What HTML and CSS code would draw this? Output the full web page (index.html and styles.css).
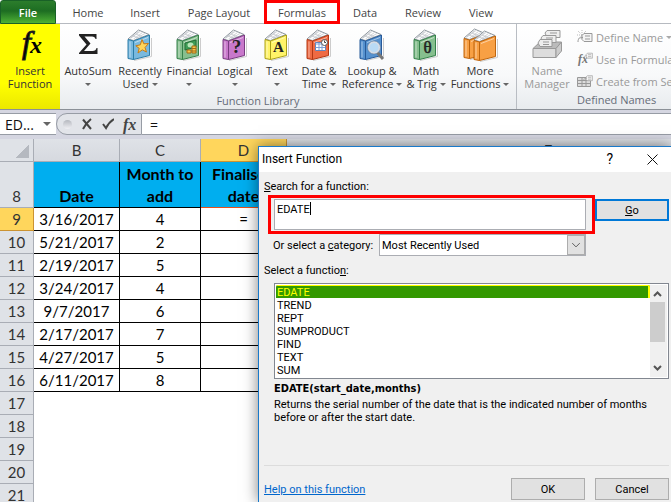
FILE: index.html
```
<!DOCTYPE html>
<html lang="en">
  <head>
    <meta charset="UTF-8" />
    <meta name="viewport" content="width=device-width, initial-scale=1.0" />
    <title>Insert Function</title>
    <link rel="stylesheet" href="styles.css">
  </head>
  <body>
    <!-- shared icon shapes -->
    <svg class="symbols" aria-hidden="true">
      <symbol id="book" viewBox="0 0 26 32">
        <path class="book-shade" d="M7 31.500L24.500 27.500V9" />
        <path class="book-pages" d="M1 10L11.500 1L22 5.500L6.500 11.500Z" />
        <path class="book-lines" d="M4 9L13 2.500M6.500 10L15.500 3.500M9 9.500L18 4.500M3 9.500L11.500 2.500M9 5L16 8M6 7L13 9.500" />
        <path class="book-cover" d="M1 10.500L6.500 12V30.500L1 29.500Z" />
        <path class="book-cover" d="M6.500 12L22.500 6V26.500L6.500 30.500Z" />
        <path class="book-glint" d="M3 12.500V28.500M8 13.500L21 8.500" />
      </symbol>
      <symbol id="tag" viewBox="0 0 16 12">
        <path d="M5 3.500L7 1.500H15V9.500H7L5 7.500Z" fill="#f4f4f4" stroke="#999" />
        <path d="M8 4H13M8 7H13M1 10C1 6 3 5.500 6 5.500" fill="none" stroke="#999" />
      </symbol>
    </svg>

    <nav class="tabs">
      <button class="tab file">File</button>
      <button class="tab home">Home</button>
      <button class="tab insert">Insert</button>
      <button class="tab layout">Page Layout</button>
      <button class="tab formulas">Formulas</button>
      <button class="tab data">Data</button>
      <button class="tab review">Review</button>
      <button class="tab view">View</button>
    </nav>

    <div class="ribbon">
      <button class="tool insert-function">
        <svg class="icon" viewBox="0 0 28 32">
          <text class="fx-f" x="6" y="24">f</text>
          <text class="fx-x" x="14" y="24">x</text>
        </svg>
        <span>Insert<br>Function</span>
      </button>
      <div class="group library">
        <div class="tools">
          <button class="tool autosum">
            <svg class="icon" viewBox="0 0 28 32">
              <path d="M5 5H22.500V10H21.500Q21 7.500 18 7.500H10.500L16.500 14.500L10 22H18.500Q22 22 22.500 19H23.500V25H5V24L12.500 15.500L5 6.500Z" fill="#222" />
            </svg>
            <span>AutoSum<br><i class="arrow"></i></span>
          </button>
          <button class="tool recent">
            <svg class="icon book blue" viewBox="0 0 26 32"><use href="#book" />
              <path d="M15 10.500L16.800 14.800L21.500 14.500L18 18.500L19.500 23L15.300 20.800L11 24L12.200 19.300L8.800 16.800L13.300 15.800Z" fill="#ffd65a" stroke="#c77a16" /></svg>
            <span>Recently<br>Used <i class="arrow"></i></span>
          </button>
          <button class="tool financial">
            <svg class="icon book green" viewBox="0 0 26 32"><use href="#book" />
              <path d="M9 14L20 11V18L9 21Z" fill="#3f9c56" stroke="#246c36" /><ellipse cx="14.500" cy="16" rx="3" ry="2.500" fill="#b9e6b8" />
              <path d="M11 21H15V24H11ZM16 17H20V24H16Z" fill="#f6c54b" stroke="#a66b14" /><path d="M16 19.500H20M16 22H20" stroke="#a66b14" /></svg>
            <span>Financial<br><i class="arrow"></i></span>
          </button>
          <button class="tool logical">
            <svg class="icon book purple" viewBox="0 0 26 32"><use href="#book" /><text class="glyph" x="14.500" y="24">?</text></svg>
            <span>Logical<br><i class="arrow"></i></span>
          </button>
          <button class="tool text">
            <svg class="icon book yellow" viewBox="0 0 26 32"><use href="#book" /><text class="glyph small" x="14.500" y="23">A</text></svg>
            <span>Text<br><i class="arrow"></i></span>
          </button>
          <button class="tool date">
            <svg class="icon book red" viewBox="0 0 26 32"><use href="#book" />
              <path d="M9.500 13.500H19.500V21.500H9.500Z" fill="#fff" stroke="#6484bb" /><path d="M9.500 15H19M9.500 18.500H19M13 14V21M16 14V21" stroke="#7d9fd6" />
              <circle cx="18.500" cy="13.500" r="3" fill="#fff" stroke="#555" /><path d="M18.500 11.500V13.500H20" fill="none" stroke="#444" /></svg>
            <span>Date &amp;<br>Time <i class="arrow"></i></span>
          </button>
          <button class="tool lookup">
            <svg class="icon book navy" viewBox="0 0 26 32"><use href="#book" />
              <path d="M18 23L24 30" stroke="#777" stroke-width="3" /><circle cx="15" cy="18.500" r="5.500" fill="#b9daf5" stroke="#d6dce5" stroke-width="2" /><circle cx="15" cy="18.500" r="6.500" fill="none" stroke="#68778b" stroke-width=".5" /></svg>
            <span>Lookup &amp;<br>Reference <i class="arrow"></i></span>
          </button>
          <button class="tool math">
            <svg class="icon book green" viewBox="0 0 26 32"><use href="#book" /><text class="glyph theta" x="14.500" y="24">θ</text></svg>
            <span>Math<br>&amp; Trig <i class="arrow"></i></span>
          </button>
          <button class="tool more">
            <svg class="icon orange" viewBox="0 0 34 32"><use href="#book" width="26" height="32" x="0" y="-1" /><use href="#book" width="26" height="32" x="10" y="1" /></svg>
            <span>More<br>Functions <i class="arrow"></i></span>
          </button>
        </div>
        <div class="group-name">Function Library</div>
      </div>
      <div class="group names">
        <button class="tool manager" disabled>
          <svg class="icon" viewBox="0 0 32 32">
            <path d="M2 19.500L9 13H30.500L25 19.500Z" fill="#bbb" stroke="#999" />
            <g fill="#eee" stroke="#999"><path d="M14 4L16 1.500H29V8.500H16Z" /><path d="M10 9L12 6.500H25V13.500H12Z" /><path d="M7 14L9 10.500H21V17.500H9Z" /></g>
            <path d="M19 4H26M15 9H22M12 13H18M12 15.500H18" stroke="#999" />
            <path d="M2 19.500H25V28.500H2Z" fill="#ddd" stroke="#999" /><path d="M25 19.500L30.500 13V22L25 28.500Z" fill="#ccc" stroke="#999" />
          </svg>
          <span>Name<br>Manager</span>
        </button>
        <div class="name-list">
          <button class="line-tool" disabled>
            <svg viewBox="0 0 16 14"><path d="M1 1L9 9M9 1L1 9M5 0V10M0 5H10" stroke="#bbb" stroke-dasharray="1 1" /><use href="#tag" x="0" y="2" width="16" height="12" /></svg>
            Define Name <i class="arrow"></i>
          </button>
          <button class="line-tool" disabled>
            <svg viewBox="0 0 16 14"><text class="mini-fx" x="1" y="11">fx</text><use href="#tag" x="6" y="0" width="10" height="8" /></svg>
            Use in Formula <i class="arrow"></i>
          </button>
          <button class="line-tool" disabled>
            <svg viewBox="0 0 16 14"><path d="M.5 3.500H13.500V12.500H.5ZM.5 6.500H13M.5 9.500H13M5 3.500V12M9 3.500V12" fill="#ddd" stroke="#999" /><use href="#tag" x="6" y="0" width="10" height="9" /></svg>
            Create from Selection
          </button>
          <div class="group-name">Defined Names</div>
        </div>
      </div>
    </div>

    <div class="formula-bar">
      <div class="name-box"><span>ED...</span><i class="arrow"></i></div>
      <div class="formula-tools">
        <i class="knob"></i>
        <button aria-label="Cancel entry"><svg viewBox="0 0 12 12"><path d="M2 1.500L10 11M10 1Q5 5 2 11" fill="none" stroke="#444" stroke-width="2" /></svg></button>
        <button aria-label="Enter"><svg viewBox="0 0 12 12"><path d="M1 6L4 10Q7 4 12 1" fill="none" stroke="#444" stroke-width="2" /></svg></button>
        <button class="fx" aria-label="Insert function">fx</button>
      </div>
      <input class="formula" type="text" value="=" aria-label="Formula">
    </div>

    <main class="sheet">
      <table>
        <colgroup>
          <col class="col-row"><col class="col-b"><col class="col-c"><col class="col-d"><col class="col-e">
        </colgroup>
        <thead>
          <tr><th class="corner"></th><th>B</th><th>C</th><th class="active">D</th><th>E</th></tr>
        </thead>
        <tbody>
          <tr class="titles"><th>8</th><td>Date</td><td>Month to<br>add</td><td>Finalised<br>date</td></tr>
          <tr><th class="active">9</th><td>3/16/2017</td><td>4</td><td>=</td></tr>
          <tr><th>10</th><td>5/21/2017</td><td>2</td><td></td></tr>
          <tr><th>11</th><td>2/19/2017</td><td>5</td><td></td></tr>
          <tr><th>12</th><td>3/24/2017</td><td>4</td><td></td></tr>
          <tr><th>13</th><td>9/7/2017</td><td>6</td><td></td></tr>
          <tr><th>14</th><td>2/17/2017</td><td>7</td><td></td></tr>
          <tr><th>15</th><td>4/27/2017</td><td>5</td><td></td></tr>
          <tr><th>16</th><td>6/11/2017</td><td>8</td><td></td></tr>
          <tr><th>17</th></tr>
          <tr><th>18</th></tr>
          <tr><th>19</th></tr>
          <tr><th>20</th></tr>
          <tr><th>21</th></tr>
        </tbody>
      </table>
    </main>

    <section class="dialog" role="dialog" aria-labelledby="dialogTitle">
      <header class="title-bar">
        <h1 id="dialogTitle">Insert Function</h1>
        <button aria-label="Help">?</button>
        <button aria-label="Close"><svg viewBox="0 0 11 11"><path d="M.5 .5L10.500 10.500M10.500 .5L.5 10.500" stroke="#111" /></svg></button>
      </header>
      <div class="dialog-body">
        <label class="caption" for="search"><u>S</u>earch for a function:</label>
        <div class="search-row">
          <div class="highlight"><textarea id="search">EDATE</textarea><i class="caret"></i></div>
          <button class="push default"><u>G</u>o</button>
        </div>
        <div class="category-row">
          <label for="category">Or select a <u>c</u>ategory:</label>
          <div class="dropdown">
            <select id="category"><option>Most Recently Used</option></select>
            <svg viewBox="0 0 17 19"><path d="M4.500 7.500L8.500 11.500L12.500 7.500" fill="none" stroke="#555" /></svg>
          </div>
        </div>
        <label class="caption" for="functions">Select a functio<u>n</u>:</label>
        <div class="list">
          <select id="functions" size="7">
            <option selected>EDATE</option>
            <option>TREND</option>
            <option>REPT</option>
            <option>SUMPRODUCT</option>
            <option>FIND</option>
            <option>TEXT</option>
            <option>SUM</option>
          </select>
          <div class="scrollbar">
            <svg viewBox="0 0 15 17"><path d="M4 11L7.500 7.500L11 11" /></svg>
            <div class="thumb"></div>
            <svg viewBox="0 0 15 17"><path d="M4 6L7.500 9.500L11 6" /></svg>
          </div>
        </div>
        <div class="description">
          <strong>EDATE(start_date,months)</strong>
          <p>Returns the serial number of the date that is the indicated number of months before or after the start date.</p>
        </div>
        <footer>
          <a href="#">Help on this function</a>
          <button class="push">OK</button>
          <button class="push">Cancel</button>
        </footer>
      </div>
    </section>
  </body>
</html>
```

FILE: styles.css
```
* {
  margin: 0;
  padding: 0;
  box-sizing: border-box;
}

body {
  display: flex;
  flex-direction: column;
  height: 100vh;
  overflow: hidden;
  position: relative;
  background: #fff;
  color: #333;
  font-family: "Open Sans", "Noto Sans", sans-serif;
  font-size: 11px;
  line-height: 13px;
}

button {
  border: none;
  background: none;
  color: inherit;
  font: inherit;
}

.symbols {
  position: absolute;
  width: 0;
  height: 0;
}

.arrow {
  display: inline-block;
  width: 0;
  height: 0;
  border: 3px solid transparent;
  border-top-color: #666;
  border-bottom: none;
  vertical-align: 2px;
}

/* tabs */
.tabs {
  display: flex;
  flex: none;
  height: 24px;
  border-bottom: 1px solid #b6bac0;
}

.tab {
  flex: none;
  height: 24px;
  color: #444;
  white-space: nowrap;
}

.file {
  width: 56px;
  background: linear-gradient(#2c7d2c, #1d6d22 45%, #4eb134);
  border: 1px solid #196127;
  border-radius: 3px 3px 0 0;
  color: #fff;
  font-weight: 600;
}

.home {
  width: 64px;
}

.insert {
  width: 50px;
}

.layout {
  width: 98px;
}

.formulas {
  width: 76px;
  margin-left: -4px;
  background: #fff;
  border: 3px solid #fe0000;
}

.data {
  width: 50px;
}

.review {
  width: 66px;
}

.view {
  width: 50px;
}

/* ribbon */
.ribbon {
  display: flex;
  flex: none;
  height: 86px;
  overflow: hidden;
  background: linear-gradient(#fff, #f8f9fa 60%, #e8ebee);
  border-bottom: 1px solid #8b9097;
}

.tool {
  display: flex;
  flex-direction: column;
  align-items: center;
  flex: none;
  gap: 3px;
  padding-top: 5px;
  white-space: nowrap;
}

.icon {
  width: 28px;
  height: 32px;
  overflow: visible;
}

.icon.book {
  width: 26px;
}

.insert-function {
  width: 60px;
  background: linear-gradient(#ff0, #ff0 70%, #ebe800);
}

.fx-f,
.fx-x,
.mini-fx,
.fx {
  font-family: "Liberation Serif", serif;
  font-style: italic;
}

.fx-f {
  font-size: 32px;
  stroke: #222;
}

.fx-x {
  font-size: 24px;
  font-weight: bold;
}

.mini-fx {
  font-size: 12px;
  font-weight: bold;
  fill: #777;
}

.group {
  display: flex;
  flex: none;
}

.library {
  flex-direction: column;
  width: 457px;
  border-right: 1px solid #b9bdc3;
}

.tools {
  display: flex;
  height: 70px;
}

.group-name {
  color: #666c78;
  text-align: center;
  line-height: 14px;
}

/* centred under the Insert Function button as well */
.library .group-name {
  padding-right: 60px;
}

.autosum {
  width: 56px;
}

.recent {
  width: 48px;
}

.financial {
  width: 50px;
}

.logical {
  width: 42px;
}

.text {
  width: 42px;
}

.date {
  width: 42px;
}

.lookup {
  width: 64px;
}

.math {
  width: 44px;
}

.more {
  width: 64px;
}

.icon.orange {
  width: 34px;
}

.book-cover {
  fill: var(--cover);
  stroke: var(--edge);
}

.book-pages {
  fill: #fff;
  stroke: #8c959d;
}

.book-lines {
  fill: none;
  stroke: #bbc0c5;
  stroke-width: .7;
}

.book-shade {
  fill: none;
  stroke: #ccc;
}

.book-glint {
  fill: none;
  stroke: #fff;
  stroke-opacity: .5;
}

.blue {
  --cover: #79b9df;
  --edge: #2c7da8;
}

.green {
  --cover: #86bf8e;
  --edge: #35814a;
}

.purple {
  --cover: #c878cb;
  --edge: #793c80;
}

.yellow {
  --cover: #fff368;
  --edge: #aaa019;
}

.red {
  --cover: #ef6a43;
  --edge: #b33815;
}

.navy {
  --cover: #5591cf;
  --edge: #275a99;
}

.orange {
  --cover: #f8a044;
  --edge: #bf650d;
}

.glyph {
  font-family: "Liberation Serif", serif;
  font-size: 19px;
  font-weight: bold;
  text-anchor: middle;
  fill: #222;
}

.glyph.small {
  font-size: 15px;
}

.glyph.theta {
  font-size: 17px;
  font-weight: normal;
  stroke: #222;
  stroke-width: .5;
}

.names {
  flex: 1;
  min-width: 0;
  overflow: hidden;
  color: #999;
}

.names .arrow {
  border-top-color: #aaa;
}

.manager {
  width: 60px;
}

.manager .icon {
  width: 32px;
}

.name-list {
  display: flex;
  flex-direction: column;
  align-items: flex-start;
  padding-top: 2px;
}

.name-list .group-name {
  line-height: 16px;
}

.line-tool {
  display: flex;
  align-items: center;
  gap: 3px;
  height: 22px;
  white-space: nowrap;
}

.line-tool svg {
  width: 16px;
  height: 14px;
}

/* formula bar */
.formula-bar {
  display: flex;
  flex: none;
  height: 29px;
  padding: 3px 0 4px;
  background: #d5d6e1;
}

.name-box,
.formula-tools,
.formula {
  border: 1px solid #979ca5;
  border-width: 1px 0;
  background: #fff;
}

.name-box {
  display: flex;
  align-items: center;
  justify-content: space-between;
  width: 56px;
  padding: 0 5px;
  color: #111;
  font-size: 14px;
}

.name-box .arrow {
  border-width: 4px 4px 0;
}

.formula-tools {
  display: flex;
  align-items: center;
  gap: 9px;
  width: 86px;
  padding-left: 6px;
  background: #e2e4e9;
  border-width: 1px;
  border-radius: 11px 0 0 11px;
}

.formula-tools svg {
  display: block;
  width: 12px;
  height: 12px;
}

.knob {
  width: 9px;
  height: 9px;
  border-radius: 50%;
  background: linear-gradient(#b5b8bf, #f0f0f4);
}

.fx {
  color: #444;
  font-size: 16px;
  font-weight: bold;
}

.formula {
  flex: 1;
  min-width: 0;
  padding-left: 8px;
  color: #111;
  font: 14px "Open Sans", sans-serif;
}

/* sheet */
.sheet {
  flex: 1;
  min-height: 0;
  overflow: hidden;
}

table {
  width: 810px;
  table-layout: fixed;
  border-collapse: separate;
  border-spacing: 0;
  color: #000;
  font-family: Lato, sans-serif;
  font-size: 15px;
  line-height: 22px;
}

.col-row {
  width: 34px;
}

.col-b {
  width: 86px;
}

.col-c {
  width: 81px;
}

.col-d {
  width: 86px;
}

tr {
  height: 23px;
}

th {
  border: 1px solid #a9adb5;
  border-width: 0 1px 1px 0;
  background: #dfe2e7;
  color: #333;
  font-weight: normal;
}

thead th {
  background: linear-gradient(#dfe2e7, #d6d9df);
}

thead .corner {
  background: linear-gradient(135deg, transparent 50%, #b5b9c0 50%) 15px 5px / 14px 14px no-repeat #dfe2e7;
}

th.active {
  background: #ffd65c;
  border-color: #cb9332;
}

td {
  border: 1px solid #000;
  border-width: 0 1px 1px 0;
  text-align: center;
}

.titles {
  height: 46px;
}

.titles th {
  vertical-align: bottom;
}

.titles td {
  background: #00aeef;
  font-size: 16px;
  font-weight: bold;
  vertical-align: bottom;
}

.titles td:last-child {
  border-bottom-color: #e6501b;
}

/* dialog, over the sheet */
.dialog {
  position: absolute;
  top: 146px;
  right: 0;
  bottom: 0;
  left: 258px;
  border: 1px solid #1979ca;
  border-width: 1px 0 0 1px;
  background: #f0f0f0;
  box-shadow: 0 0 14px rgba(0, 0, 0, .5);
  color: #000;
  font-family: Roboto, sans-serif;
}

.title-bar {
  display: flex;
  align-items: center;
  gap: 34px;
  height: 25px;
  padding: 0 13px 0 3px;
  background: #fff;
}

.title-bar h1 {
  flex: 1;
  font-size: 12px;
  font-weight: normal;
}

.title-bar button {
  font-size: 14px;
}

.title-bar svg {
  display: block;
  width: 11px;
  height: 11px;
}

.dialog-body {
  padding: 7px 2px 0 5px;
}

.caption {
  display: block;
  line-height: 16px;
}

.search-row {
  display: flex;
  align-items: center;
  padding-left: 4px;
}

.highlight {
  position: relative;
  flex: 1;
  height: 39px;
  padding: 1px 6px 1px 3px;
  border: 3px solid #fe0000;
}

textarea {
  display: block;
  width: 100%;
  height: 31px;
  padding: 2px;
  border: 1px solid #abadb3;
  outline: none;
  background: #fff;
  resize: none;
  overflow: hidden;
  font: 11px/15px Roboto, sans-serif;
}

.caret {
  position: absolute;
  top: 4px;
  left: 39px;
  width: 1px;
  height: 13px;
  background: #000;
}

.push {
  width: 74px;
  height: 22px;
  border: 1px solid #adadad;
  background: #e1e1e1;
}

.default {
  border: 2px solid #0078d7;
}

.search-row .push {
  align-self: flex-start;
  margin-top: 4px;
}

.category-row {
  display: flex;
  align-items: center;
  gap: 4px;
  padding: 0 83px 0 9px;
}

.category-row label {
  width: 102px;
  white-space: nowrap;
}

.dropdown {
  display: flex;
  flex: 1;
  height: 22px;
  border: 1px solid #abadb3;
  background: #fff;
}

.dropdown select {
  flex: 1;
  padding-left: 2px;
  border: none;
  appearance: none;
  background: #fff;
  font: inherit;
}

.dropdown svg {
  width: 18px;
  border: 1px solid #adadad;
  background: #e1e1e1;
}

.category-row + .caption {
  padding-top: 8px;
  line-height: 14px;
}

.list {
  display: flex;
  height: 96px;
  margin: 5px 0 0 10px;
  padding: 1px;
  border: 1px solid #828790;
  background: #fff;
}

.list select {
  flex: 1;
  border: none;
  outline: none;
  background: #fff;
  overflow: hidden;
  font: inherit;
}

.list option {
  height: 13px;
  min-height: 13px;
  padding: 1px 1px 0;
  line-height: 13px;
}

.list option:checked {
  background: linear-gradient(#390, #390);
  box-shadow: inset -2px 1px #ff0;
  -webkit-text-fill-color: #ff0;
}

.scrollbar {
  display: flex;
  flex-direction: column;
  width: 17px;
  padding-right: 2px;
  background: #f0f0f0;
}

.scrollbar svg {
  width: 15px;
  height: 17px;
}

.scrollbar path {
  fill: none;
  stroke: #555;
  stroke-width: 2;
}

.thumb {
  height: 40px;
  margin-bottom: auto;
  background: #cdcdcd;
}

.description {
  min-height: 86px;
  padding: 2px 10px 0;
}

.description strong {
  display: block;
  font-family: "DejaVu Sans Condensed", "DejaVu Sans", sans-serif;
  line-height: 15px;
}

.description p {
  padding-top: 2px;
}

footer {
  display: flex;
  align-items: center;
  gap: 10px;
  padding-top: 12px;
  border-top: 1px solid #dcdcdc;
}

footer a {
  flex: 1;
  color: #0066cc;
}
```
